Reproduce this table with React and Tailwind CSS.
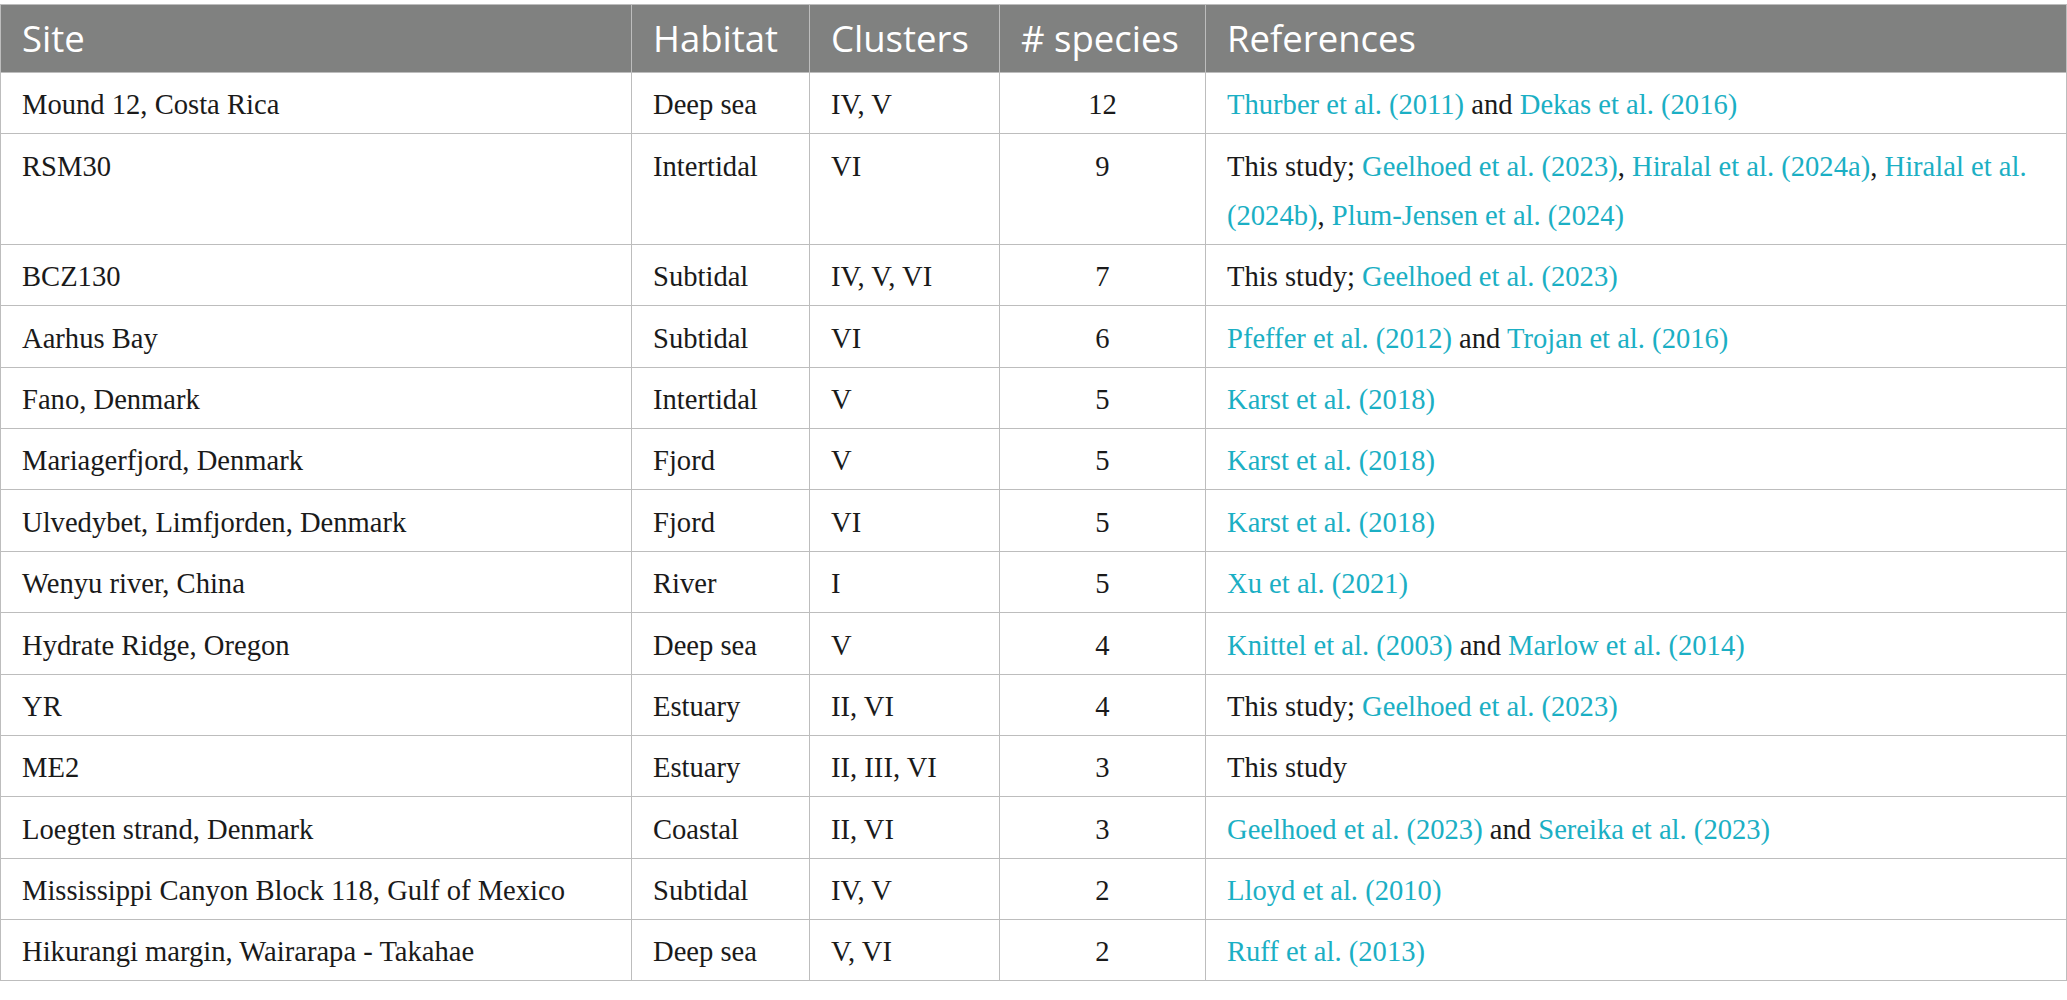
import React from "react";

const L = ({ children }) => <span className="text-[#1bafc4]">{children}</span>;

const rows = [
  ["Mound 12, Costa Rica", "Deep sea", "IV, V", "12", <><L>Thurber et al. (2011)</L> and <L>Dekas et al. (2016)</L></>],
  ["RSM30", "Intertidal", "VI", "9", <>This study; <L>Geelhoed et al. (2023)</L>, <L>Hiralal et al. (2024a)</L>, <L>Hiralal et al.</L><br /><L>(2024b)</L>, <L>Plum-Jensen et al. (2024)</L></>],
  ["BCZ130", "Subtidal", "IV, V, VI", "7", <>This study; <L>Geelhoed et al. (2023)</L></>],
  ["Aarhus Bay", "Subtidal", "VI", "6", <><L>Pfeffer et al. (2012)</L> and <L>Trojan et al. (2016)</L></>],
  ["Fano, Denmark", "Intertidal", "V", "5", <L>Karst et al. (2018)</L>],
  ["Mariagerfjord, Denmark", "Fjord", "V", "5", <L>Karst et al. (2018)</L>],
  ["Ulvedybet, Limfjorden, Denmark", "Fjord", "VI", "5", <L>Karst et al. (2018)</L>],
  ["Wenyu river, China", "River", "I", "5", <L>Xu et al. (2021)</L>],
  ["Hydrate Ridge, Oregon", "Deep sea", "V", "4", <><L>Knittel et al. (2003)</L> and <L>Marlow et al. (2014)</L></>],
  ["YR", "Estuary", "II, VI", "4", <>This study; <L>Geelhoed et al. (2023)</L></>],
  ["ME2", "Estuary", "II, III, VI", "3", <>This study</>],
  ["Loegten strand, Denmark", "Coastal", "II, VI", "3", <><L>Geelhoed et al. (2023)</L> and <L>Sereika et al. (2023)</L></>],
  ["Mississippi Canyon Block 118, Gulf of Mexico", "Subtidal", "IV, V", "2", <L>Lloyd et al. (2010)</L>],
  ["Hikurangi margin, Wairarapa - Takahae", "Deep sea", "V, VI", "2", <L>Ruff et al. (2013)</L>],
];

const th = "border border-[#bdbdbd] px-[21px] pt-[9px] pb-[9px] text-left font-normal leading-[49px] align-middle";
const td = "border border-[#bdbdbd] px-[21px] pt-[7.4px] pb-[4px] leading-[49px] align-top";

export default function App() {
  return (
    <div className="w-[2067px] h-[1000px] bg-white pt-[4px]">
      <table className="w-[2066px] table-fixed border-collapse">
        <colgroup>
          <col className="w-[631px]" />
          <col className="w-[178px]" />
          <col className="w-[190px]" />
          <col className="w-[206px]" />
          <col className="w-[861px]" />
        </colgroup>
        <thead>
          <tr className="bg-[#808180] text-white text-[36.5px] [font-family:'Open_Sans',sans-serif]">
            <th className={th}>Site</th>
            <th className={th}>Habitat</th>
            <th className={th}>Clusters</th>
            <th className={th}># species</th>
            <th className={th}>References</th>
          </tr>
        </thead>
        <tbody className="text-[28.6px] text-[#1a1a1a] [font-family:'Liberation_Serif',serif]">
          {rows.map((r, i) => (
            <tr key={i}>
              <td className={td + " whitespace-nowrap"}>{r[0]}</td>
              <td className={td + " whitespace-nowrap"}>{r[1]}</td>
              <td className={td + " whitespace-nowrap"}>{r[2]}</td>
              <td className={td + " text-center"}>{r[3]}</td>
              <td className={td + " whitespace-nowrap"}>{r[4]}</td>
            </tr>
          ))}
        </tbody>
      </table>
    </div>
  );
}
